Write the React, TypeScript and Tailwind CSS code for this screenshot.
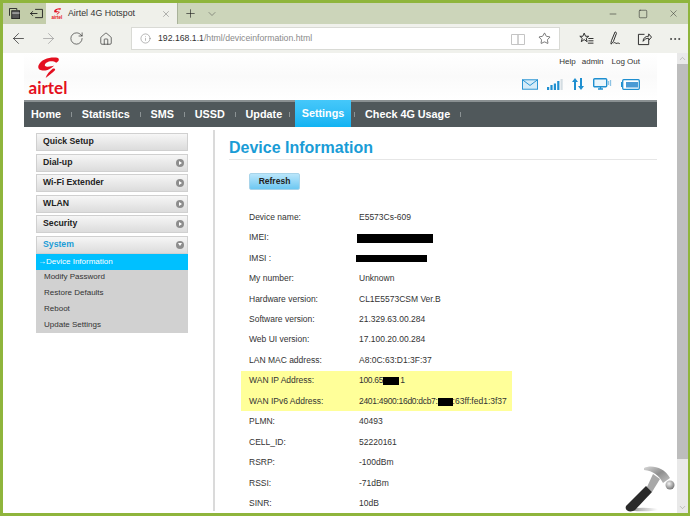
import { ArrowLeft, ArrowRight, RotateCw, Home, Info, Star, Plus, ChevronDown, X, Minus, Square, Ellipsis, ChevronUp } from "lucide-react";

const menu = [
  { name: "Quick Setup", arrow: false },
  { name: "Dial-up", arrow: true },
  { name: "Wi-Fi Extender", arrow: true },
  { name: "WLAN", arrow: true },
  { name: "Security", arrow: true },
];

const subMenu = ["Modify Password", "Restore Defaults", "Reboot", "Update Settings"];

const Redacted = ({ className }: { className: string }) => <span className={`inline-block bg-black ${className}`} />;

const rows: { label: string; value: React.ReactNode; hl?: boolean }[] = [
  { label: "Device name:", value: "E5573Cs-609" },
  { label: "IMEI:", value: <Redacted className="h-[9px] w-[76px] -ml-0.5 align-middle" /> },
  { label: "IMSI :", value: <Redacted className="h-[7px] w-[71px] -ml-[3px] align-middle" /> },
  { label: "My number:", value: "Unknown" },
  { label: "Hardware version:", value: "CL1E5573CSM Ver.B" },
  { label: "Software version:", value: "21.329.63.00.284" },
  { label: "Web UI version:", value: "17.100.20.00.284" },
  { label: "LAN MAC address:", value: "A8:0C:63:D1:3F:37" },
  {
    label: "WAN IP Address:",
    hl: true,
    value: (
      <>
        <span className="tracking-[-0.3px]">100.65</span>
        <Redacted className="mr-[1px] h-[8px] w-4 align-middle" />1
      </>
    ),
  },
  {
    label: "WAN IPv6 Address:",
    hl: true,
    value: (
      <>
        <span className="tracking-[-0.3px]">2401:4900:16d0:dcb7:</span>
        <Redacted className="h-[8px] w-[15px] align-middle" />
        :63ff:fed1:3f37
      </>
    ),
  },
  { label: "PLMN:", value: "40493" },
  { label: "CELL_ID:", value: "52220161" },
  { label: "RSRP:", value: "-100dBm" },
  { label: "RSSI:", value: "-71dBm" },
  { label: "SINR:", value: "10dB" },
];

const navItems = ["Home", "Statistics", "SMS", "USSD", "Update"];

const Swoosh = ({ className }: { className: string }) => (
  <svg viewBox="0 0 22 22" className={className}>
    <path
      d="M21 1C14-.5 3 2 .5 9-1 14 5 15 10 13.500 13 12.500 15 11 17 9 14 10 9 11 7.500 9.500 6 7.500 10 4.500 14 4.500 16 4.500 17.500 5 19 6 22 5 22.500 2 21 1ZM15 12.500C12 15 9 18 8 22 11 19.500 15 16.500 18 13.500 18 12 16 11.800 15 12.500Z"
      fill="#e40f20"
    />
  </svg>
);

const Divider = () => <span className="block h-[5px] w-px bg-[#8b9294]" />;

const App = () => {
  return (
    <div className="relative flex h-[516px] w-[690px] flex-col overflow-hidden bg-[#8fb53c] pt-[3px] pr-[2px] pb-[3px] pl-[3px] font-['Liberation_Sans',Arial,sans-serif] text-[#222]">
      {/* tab strip */}
      <div className="flex h-[21px] shrink-0 items-center bg-[#ccd5ba] text-[#222]">
        <div className="flex h-full w-[43px] items-center gap-[10px] bg-[#c3cdaa] pl-[6px]">
          <svg viewBox="0 0 12 12" className="h-[11px] w-[11px]" fill="none" stroke="#222" strokeWidth="1">
            <path d="M.5 8.500V.5h8v2" />
            <rect x="3" y="3" width="8.500" height="8.500" fill="#555" />
            <path d="M3.500 5.500h8" stroke="#ddd" />
          </svg>
          <svg viewBox="0 0 14 12" className="h-[11px] w-[13px]" fill="none" stroke="#222" strokeWidth="1">
            <path d="M5.500 1.500h8v9h-8M0 6h8M3 3.500 .7 6 3 8.500" />
          </svg>
        </div>
        <div className="flex h-full w-[132px] items-center border-r border-[#a9b29a] bg-[#eff0ea] pl-[5px]">
          <span className="flex w-[12px] flex-col items-center">
            <Swoosh className="h-[7px] w-[7px]" />
            <span className="text-[4.500px] leading-[5px] font-bold text-[#e40f20]">airtel</span>
          </span>
          <span className="ml-[5px] text-[8.800px] whitespace-nowrap text-[#333]">Airtel 4G Hotspot</span>
          <X className="mr-[6px] ml-auto h-[10px] w-[10px] text-[#555]" strokeWidth={1} />
        </div>
        <Plus className="ml-[6px] h-[13px] w-[13px]" strokeWidth={1.2} />
        <ChevronDown className="ml-[9px] h-[12px] w-[12px] text-[#444]" strokeWidth={1} />
        <div className="ml-auto flex items-center gap-[20px] pr-[9px]">
          <Minus className="h-[10px] w-[10px] text-[#222]" strokeWidth={1.3} />
          <Square className="h-[10px] w-[10px] text-[#222]" strokeWidth={1.3} />
          <X className="h-[11px] w-[11px] text-[#222]" strokeWidth={1} />
        </div>
      </div>

      {/* address bar */}
      <div className="flex h-[29px] shrink-0 items-center bg-[#f0f1ec]">
        <ArrowLeft className="ml-[7px] h-[17px] w-[17px] text-[#222]" strokeWidth={1} />
        <ArrowRight className="ml-[13px] h-[17px] w-[17px] text-[#9a9a9a]" strokeWidth={1} />
        <RotateCw className="ml-[12px] h-[15px] w-[15px] text-[#222]" strokeWidth={1} />
        <Home className="ml-[15px] h-[14px] w-[14px] text-[#222]" strokeWidth={1.1} />
        <div className="ml-[18px] flex h-[23px] w-[429px] items-center border border-[#d9dad5] bg-white pl-[8px]">
          <Info className="h-[11px] w-[11px] text-[#666]" strokeWidth={1} />
          <span className="ml-[7px] text-[8.700px] text-[#333]">
            192.168.1.1<span className="text-[#8a8a8a]">/html/deviceinformation.html</span>
          </span>
          <svg viewBox="0 0 14 12" className="ml-auto h-[12px] w-[14px]" fill="none" stroke="#c4c4c4">
            <path d="M.5 1.500h6.500v10H.5zM7 1.500h6.500v10H7z" />
          </svg>
          <Star className="mr-[8px] ml-[13px] h-[13px] w-[13px] text-[#222]" strokeWidth={1.1} />
        </div>
        <div className="ml-[19px] flex items-center gap-[14px] text-[#222]">
          <svg viewBox="0 0 16 14" className="h-[13px] w-[15px]" fill="none" stroke="currentColor">
            <path d="M5.500 1.200 7 4.600h3.400L7.700 6.800l1 3.600-3.200-2.200-3.100 2.200 1-3.600L.8 4.600h3.300zM10 7h5.500M10 9.500h5.500M9.500 12h6" />
          </svg>
          <svg viewBox="0 0 16 16" className="h-[15px] w-[15px]" fill="none" stroke="currentColor">
            <path d="M7.500 1 3.800 10c-.6 1.500-.6 3-.6 4 1-.6 2-1.700 2.600-3L9 2.500C8.800 1.300 8 .8 7.500 1ZM6 13c1.500-1.800 2 .8 3.500.2 1-.4 1.500-.5 3 .3" />
          </svg>
          <svg viewBox="0 0 16 15" className="h-[14px] w-[15px]" fill="none" stroke="currentColor">
            <path d="M8 2.500H1.500v11h11V9M6.500 10c0-3.500 2.500-5.500 6-5.500V2l3 3.500-3 3.500V6.700c-2.500 0-4.500 1-6 3.300Z" />
          </svg>
          <Ellipsis className="ml-[2px] h-[14px] w-[14px]" strokeWidth={1.2} />
        </div>
      </div>

      {/* page + scrollbar */}
      <div className="flex min-h-0 flex-1 bg-white">
        <div className="w-[21px] shrink-0" />
        <div className="flex w-[633px] shrink-0 flex-col">
          {/* header */}
          <div className="flex h-[47px] shrink-0 justify-between bg-gradient-to-b from-white via-[#fafafa] to-white pl-[4px]">
            <div className="flex w-[40px] flex-col items-center pt-[4px]">
              <Swoosh className="h-[21px] w-[21px]" />
              <span className="mt-[1px] font-['Lato',sans-serif] text-[17px] leading-[18px] font-bold text-[#e40f20]">airtel</span>
            </div>
            <div className="flex flex-col items-end pr-[17px]">
              <div className="mt-[4px] flex gap-[6px] text-[8px] leading-[10px] text-[#333]">
                <span>Help</span>
                <span>admin</span>
                <span className="ml-[2px]">Log Out</span>
              </div>
              <div className="mt-[11px] flex items-center gap-[9px]">
                <svg viewBox="0 0 17 11" className="h-[11px] w-[16px]" fill="#d5ecf8" stroke="#1f8fd0">
                  <rect x=".5" y=".5" width="16" height="10" />
                  <path d="M.5.5 8.500 6.500l8-6" fill="none" />
                </svg>
                <svg viewBox="0 0 16 11" className="h-[11px] w-[16px]">
                  <path d="M0 8h2.200v3H0zM3.400 6h2.200v5H3.400zM6.800 4.500H9V11H6.800zM10.200 2h2.200v9h-2.200z" fill="#1f8fd0" />
                  <path d="M13.500 0h2.200v11h-2.200z" fill="#d4dde2" />
                </svg>
                <svg viewBox="0 0 12 12" className="h-[12px] w-[12px]" fill="#1f8fd0">
                  <path d="M3 0 6 4H4v8H2V4H0zM9 12 6 8h2V0h2v8h2z" />
                </svg>
                <svg viewBox="0 0 19 12" className="h-[12px] w-[19px]" fill="none">
                  <rect x=".7" y=".7" width="13" height="8" rx="1" stroke="#1f8fd0" strokeWidth="1.400" fill="#eaf5fb" />
                  <path d="M5 11h5M7.500 9v2" stroke="#1f8fd0" strokeWidth="1.400" />
                  <path d="M15.500 3v4M17.500 2v6" stroke="#8dc3e4" strokeWidth="1.300" />
                </svg>
                <svg viewBox="0 0 19 11" className="h-[11px] w-[19px]" fill="none">
                  <rect x="1.700" y=".7" width="16.600" height="9.600" rx="1" stroke="#1f8fd0" strokeWidth="1.300" fill="white" />
                  <rect x="5" y="3" width="12" height="5.500" fill="#4a9ad4" />
                  <path d="M.5 3v5" stroke="#1f8fd0" />
                </svg>
              </div>
            </div>
          </div>

          {/* nav */}
          <div className="flex h-[27px] shrink-0 items-center border-t-2 border-[#8a9092] bg-[#50585b] text-[10.800px] font-bold text-white">
            <div className="flex w-[271px] items-center pl-[7px]">
              {navItems.map((item, i) => (
                <div key={item} className="flex items-center">
                  <span>{item}</span>
                  <span className={i === navItems.length - 1 ? "ml-[7px]" : "mx-[9.900px]"}>
                    <Divider />
                  </span>
                </div>
              ))}
            </div>
            <div className="-mt-[2px] flex h-[27px] w-[56px] items-center justify-center bg-gradient-to-b from-[#45c8fa] to-[#0fb3f2]">
              Settings
            </div>
            <span className="ml-[3px]">
              <Divider />
            </span>
            <span className="ml-[10px]">Check 4G Usage</span>
            <span className="ml-[10px]">
              <Divider />
            </span>
          </div>

          <div className="flex min-h-0 flex-1 overflow-hidden">
            {/* sidebar */}
            <div className="mt-[3px] mb-[2px] w-[191px] shrink-0 border-r-2 border-[#dadada] pt-[3px] pl-[12px]">
              <div className="flex w-[152px] flex-col gap-[2.500px]">
                {menu.map((m) => (
                  <div
                    key={m.name}
                    className="flex h-[18px] items-center justify-between border border-[#d0d0d0] bg-gradient-to-b from-[#f6f6f6] to-[#dcdcdc] pr-[3px] pl-[6px] text-[8.700px] font-bold text-[#222]"
                  >
                    {m.name}
                    {m.arrow && (
                      <span className="flex h-[8px] w-[8px] items-center justify-center rounded-full bg-[#8d8d8d]">
                        <span className="ml-[1px] h-0 w-0 border-y-[2.500px] border-l-[3px] border-y-transparent border-l-white" />
                      </span>
                    )}
                  </div>
                ))}
                <div>
                  <div className="flex h-[18px] items-center justify-between border border-[#d0d0d0] bg-gradient-to-b from-[#f6f6f6] to-[#dcdcdc] pr-[3px] pl-[6px] text-[8.700px] font-bold text-[#1a9cd6]">
                    System
                    <span className="flex h-[8px] w-[8px] items-center justify-center rounded-full bg-[#8d8d8d]">
                      <span className="h-0 w-0 border-x-[2.500px] border-t-[3px] border-x-transparent border-t-white" />
                    </span>
                  </div>
                  <div className="bg-[#d1d1d1] text-[8px] text-[#333]">
                    <div className="flex h-[16px] items-center bg-[#00c0ff] pl-[2px] text-white">→Device Information</div>
                    {subMenu.map((s) => (
                      <div key={s} className="flex h-[15.800px] items-center pl-[8px]">
                        {s}
                      </div>
                    ))}
                  </div>
                </div>
              </div>
            </div>

            {/* main content */}
            <div className="min-w-0 flex-1 pl-[14px]">
              <h1 className="mt-[11px] border-b border-[#e6e6e6] pb-[2px] text-[16px] leading-[19px] font-bold text-[#1a9cd6]">Device Information</h1>
              <button className="mt-[13px] ml-[20px] block h-[17px] w-[51px] rounded-[2px] border border-[#a8d4ea] bg-gradient-to-b from-[#b9e6fb] to-[#6cc8f2] text-[8.500px] font-bold text-[#222]">
                Refresh
              </button>
              <div className="mt-[17px] ml-[12px] w-[271px] text-[8.500px] text-[#333]">
                {rows.map((r) => (
                  <div key={r.label} className={`flex h-[20.450px] items-center pl-[8px] whitespace-nowrap ${r.hl ? "bg-[#ffff99]" : ""}`}>
                    <span className="w-[110px] shrink-0">{r.label}</span>
                    <span>{r.value}</span>
                  </div>
                ))}
              </div>
            </div>
          </div>
        </div>
        <div className="w-[20px] shrink-0" />

        {/* scrollbar */}
        <div className="flex w-[11px] shrink-0 flex-col bg-[#e9e9e9]">
          <div className="flex h-[11px] items-center justify-center">
            <ChevronUp className="h-[9px] w-[9px] text-[#999]" strokeWidth={1.5} />
          </div>
          <div className="h-[395px] bg-[#bdbdbd]" />
          <div className="mt-auto flex h-[11px] items-center justify-center">
            <ChevronDown className="h-[9px] w-[9px] text-[#999]" strokeWidth={1.5} />
          </div>
        </div>
      </div>

      {/* hammer watermark over the page */}
      <svg viewBox="0 0 52 48" className="absolute top-[465px] left-[625px] h-[48px] w-[52px]">
        <defs>
          <linearGradient id="head" x1="0" y1="0" x2="1" y2="1">
            <stop offset="0" stopColor="#d9d9d9" />
            <stop offset="0.5" stopColor="#8e8e8e" />
            <stop offset="1" stopColor="#c4c4c4" />
          </linearGradient>
          <radialGradient id="ball" cx="0.4" cy="0.35" r="0.7">
            <stop offset="0" stopColor="#f2f2f2" />
            <stop offset="1" stopColor="#6f6f6f" />
          </radialGradient>
          <linearGradient id="shadow" x1="0" y1="0" x2="1" y2="0">
            <stop offset="0" stopColor="#888" />
            <stop offset="1" stopColor="#fff" />
          </linearGradient>
        </defs>
        <ellipse cx="18" cy="44.500" rx="15" ry="1.800" fill="url(#shadow)" />
        <path d="M22 22 28 9l7 5-8 13Z" fill="#a8a8a8" />
        <path d="M1 41 21 21l6 6L10 45c-3 2.500-11 2-9-4Z" fill="#2a2a2a" />
        <path d="M19 3C26-.5 39 2 45 13l-7 5C34 10 28 6 19 5Z" fill="url(#head)" />
        <circle cx="45" cy="20" r="4.500" fill="url(#ball)" />
      </svg>
    </div>
  );
};

export default App;
